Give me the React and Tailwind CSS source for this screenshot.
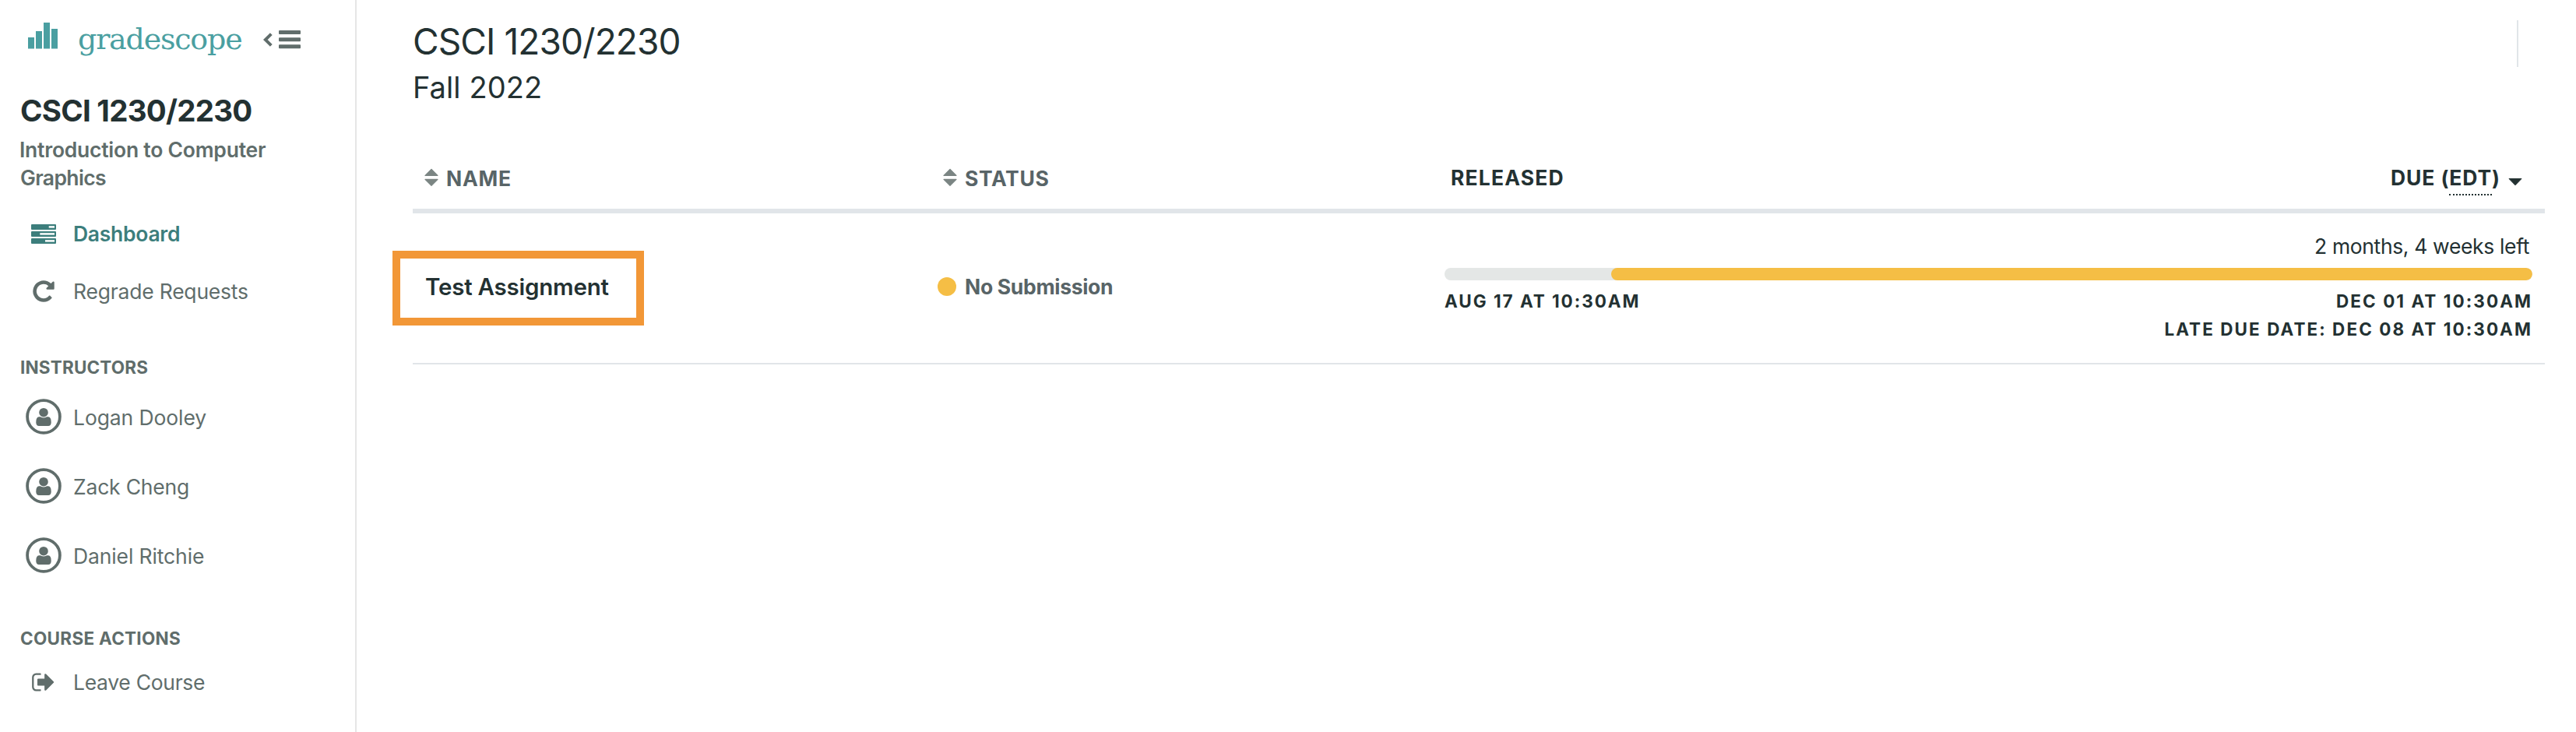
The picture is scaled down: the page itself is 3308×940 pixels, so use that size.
const instructors = [
  { name: "Logan Dooley", spacing: "pl-[15px] tracking-[-0.1px]" },
  { name: "Zack Cheng", spacing: "pl-[15px] tracking-[-0.2px]" },
  { name: "Daniel Ritchie", spacing: "pl-[15px] tracking-[-0.12px]" },
];

function LogoBars() {
  return (
    <svg className="h-[34px] w-[38px] shrink-0" viewBox="0 0 38 34" fill="#4a9fa1">
      <rect x="0" y="19" width="8" height="14.5" />
      <rect x="10" y="11" width="8" height="22.5" />
      <rect x="20" y="0" width="8" height="33.5" />
      <rect x="30" y="8" width="8" height="25.5" />
    </svg>
  );
}

function CollapseIcon() {
  return (
    <svg className="h-6 w-12" viewBox="0 0 48 24" fill="#606d6b">
      <path d="M10.3 4.6 2.8 12l7.500 7.400" fill="none" stroke="#606d6b" strokeWidth="4" />
      <rect x="20" y="0" width="28" height="5" rx="1" />
      <rect x="20" y="9.200" width="28" height="5" rx="1" />
      <rect x="20" y="18.200" width="28" height="5" rx="1" />
    </svg>
  );
}

function TasksIcon() {
  return (
    <svg className="h-[25px] w-8" viewBox="0 0 32 25" fill="#3c7e7c">
      <rect x="0" y="0" width="32" height="7" rx="1" />
      <rect x="0" y="9" width="32" height="7" rx="1" />
      <rect x="0" y="18" width="32" height="7" rx="1" />
      <g fill="#fff">
        <rect x="22.700" y="2.200" width="7.300" height="2.400" />
        <rect x="11.300" y="11.200" width="18.700" height="2.400" />
        <rect x="18" y="20.200" width="12" height="2.400" />
      </g>
    </svg>
  );
}

function RepeatIcon() {
  return (
    <svg className="size-8" viewBox="0 0 1792 1792" fill="currentColor">
      <path d="M1664 256v448q0 26-19 45t-45 19h-448q-42 0-59-40-17-39 14-69l138-138q-148-137-349-137-104 0-198.500 40.500t-163.500 109.500-109.500 163.500-40.500 198.500 40.500 198.500 109.500 163.500 163.500 109.500 198.500 40.500q119 0 225-52t179-147q7-10 23-12 15 0 25 9l137 138q9 8 9.500 20.500t-7.500 22.500q-109 132-264 204.500t-327 72.500q-156 0-298-61t-245-164-164-245-61-298 61-298 164-245 245-164 298-61q147 0 284.500 55.500t244.500 156.500l130-129q29-31 70-14 39 17 39 59z" />
    </svg>
  );
}

function SignOutIcon() {
  return (
    <svg className="size-8" viewBox="0 0 1792 1792" fill="currentColor">
      <path d="M704 1440q0 4 1 20t.5 26.500-3 23.500-10 19.500-20.500 6.500h-320q-119 0-203.500-84.500t-84.500-203.500v-704q0-119 84.500-203.500t203.500-84.500h320q13 0 22.500 9.500t9.500 22.500q0 4 1 20t.5 26.500-3 23.500-10 19.500-20.500 6.500h-320q-66 0-113 47t-47 113v704q0 66 47 113t113 47h312l11.500 1 11.500 3 8 5.500 7 9 2 13.500zm928-544q0 26-19 45l-544 544q-19 19-45 19t-45-19-19-45v-288h-448q-26 0-45-19t-19-45v-384q0-26 19-45t45-19h448v-288q0-26 19-45t45-19 45 19l544 544q19 19 19 45z" />
    </svg>
  );
}

function UserIcon() {
  return (
    <svg className="size-[46px]" viewBox="0 0 46 46" fill="#606d6b">
      <circle cx="23" cy="23" r="20.900" fill="none" stroke="#606d6b" strokeWidth="3.800" />
      <path d="M17 23.200h12c2.500 0 3.700 3 3.700 7.300 0 2.600-1.200 4.500-3.700 4.500H17c-2.500 0-3.700-1.900-3.700-4.500 0-4.300 1.200-7.300 3.700-7.300z" />
      <circle cx="23" cy="17.700" r="6.800" fill="#fff" />
      <circle cx="23" cy="17.700" r="5.800" />
    </svg>
  );
}

function SortIcon() {
  return (
    <svg className="h-6 w-[18px]" viewBox="0 0 18 24" fill="#7b8583" stroke="#7b8583" strokeWidth="1.200" strokeLinejoin="round">
      <path d="M9 1.300 17 9.400H1z" />
      <path d="M9 22.300 17 14.400H1z" />
    </svg>
  );
}

function NavRow({ icon, children }) {
  return (
    <a className="flex h-[74px] items-center">
      <span className="flex w-[46px] justify-center">{icon}</span>
      <span className="pl-[15px]">{children}</span>
    </a>
  );
}

function Sidebar() {
  return (
    <aside className="flex h-[940px] w-[458px] shrink-0 flex-col border-r-2 border-[#e6e6e6] text-[26.5px] leading-9 text-[#606d6b]">
      <div className="flex h-[120px] items-start pl-9 pt-[29px]">
        <LogoBars />
        <span className="ml-[26px] mt-[-1px] w-[238px] font-['DejaVu_Serif',serif] text-[38px] leading-[44px] tracking-[-1.2px] text-[#4a9fa1]">
          gradescope
        </span>
        <span className="mt-[10px]">
          <CollapseIcon />
        </span>
      </div>
      <h1 className="h-[54px] pl-[26px] text-[38.5px] font-bold leading-[44px] tracking-[-0.75px] text-[#233132]">
        CSCI 1230/2230
      </h1>
      <p className="w-[400px] pl-[25px] font-semibold tracking-[-0.24px]">
        Introduction to Computer
        <br />
        <span className="pl-px tracking-[-0.64px]">Graphics</span>
      </p>
      <nav className="mt-[17px] pl-[33px]">
        <NavRow icon={<TasksIcon />}>
          <span className="font-semibold tracking-[-0.28px] text-[#3c7e7c]">Dashboard</span>
        </NavRow>
        <NavRow icon={<RepeatIcon />}>
          <span className="tracking-[-0.21px]">Regrade Requests</span>
        </NavRow>
      </nav>
      <h2 className="mt-[46px] pl-[26px] text-[22.5px] font-bold leading-[30px] tracking-[0.18px]">INSTRUCTORS</h2>
      <ul className="mt-[3px] pl-[33px]">
        {instructors.map((person) => (
          <li key={person.name} className="flex h-[89px] items-center">
            <UserIcon />
            <span className="pt-[2px]">
              <span className={person.spacing}>{person.name}</span>
            </span>
          </li>
        ))}
      </ul>
      <h2 className="mt-[48px] pl-[26px] text-[22.5px] font-bold leading-[30px] tracking-[0.29px]">COURSE ACTIONS</h2>
      <nav className="mt-1 pl-[33px]">
        <NavRow icon={<SignOutIcon />}>
          <span className="tracking-[-0.3px]">Leave Course</span>
        </NavRow>
      </nav>
    </aside>
  );
}

function AssignmentTable() {
  return (
    <section className="w-[2738px] text-[26.5px] font-bold leading-9 text-[#586467]">
      <div className="grid h-[90px] grid-cols-[674px_651px_1fr] border-b-[6px] border-[#e1e5e9] pt-8">
        <div className="flex items-start pl-[15px]">
          <SortIcon />
          <span className="-mt-[5px] pl-[10px] tracking-[0.78px]">NAME</span>
        </div>
        <div className="flex items-start pl-[7px]">
          <SortIcon />
          <span className="-mt-[5px] pl-[10px] tracking-[0.66px]">STATUS</span>
        </div>
        <div className="-mt-[6px] flex items-start justify-between pl-2 pr-[29px] text-[#233132]">
          <span className="tracking-[1.16px]">RELEASED</span>
          <span className="flex items-start tracking-[0.9px]">
            DUE&nbsp;(
            <abbr className="h-[41px] border-b-2 border-dotted border-[#233132] no-underline">EDT</abbr>)
            <svg className="ml-[10px] mt-[18px] h-[11px] w-[18px]" viewBox="0 0 18 11" fill="#233132" stroke="#233132" strokeLinejoin="round">
              <path d="M1 1.500h16L9 9.800z" />
            </svg>
          </span>
        </div>
      </div>
      <div className="grid h-[194px] grid-cols-[674px_651px_1fr] border-b-2 border-[#e1e5e9]">
        <div className="relative pl-[16px] pt-[76px] text-[29.5px] font-semibold tracking-[-0.22px] text-[#233132]">
          Test Assignment
          <span className="absolute left-[-26px] top-12 h-24 w-[323px] border-[10px] border-[#f29737]" />
        </div>
        <div className="flex items-start pt-[76px]">
          <span className="mt-[6px] size-6 rounded-full bg-[#f5be45]" />
          <span className="pl-[11px] tracking-[-0.31px]">No Submission</span>
        </div>
        <div className="pr-4 pt-6 text-[22.5px] tracking-[2.05px] text-[#233132]">
          <p className="pr-1 text-right text-[26.5px] font-normal tracking-[-0.36px]">2 months, 4 weeks left</p>
          <div className="mt-[10px] flex h-4 justify-end overflow-hidden rounded-full bg-[#e4e7e6]">
            <span className="h-4 w-[1183px] rounded-full bg-[#f5be45]" />
          </div>
          <div className="mt-[9px] flex justify-between">
            <time className="tracking-[1.96px]">AUG 17 AT 10:30AM</time>
            <time>DEC 01 AT 10:30AM</time>
          </div>
          <p className="text-right">LATE DUE DATE: DEC 08 AT 10:30AM</p>
        </div>
      </div>
    </section>
  );
}

export default function App() {
  return (
    <div className="flex h-[940px] w-[3308px] overflow-hidden bg-white font-['Inter',sans-serif]">
      <Sidebar />
      <main className="flex-1 pl-[72px]">
        <header className="flex h-[184px] items-start justify-between pr-[74px] pt-[24px] text-[#233132]">
          <div>
            <h1 className="text-[46px] leading-[58px] tracking-[-0.91px]">CSCI 1230/2230</h1>
            <p className="mt-[7px] text-[38px] leading-[46px] tracking-[0.1px]">Fall 2022</p>
          </div>
          <span className="mt-[2px] h-[60px] w-[2px] bg-[#e1e5e9]" />
        </header>
        <AssignmentTable />
      </main>
    </div>
  );
}
